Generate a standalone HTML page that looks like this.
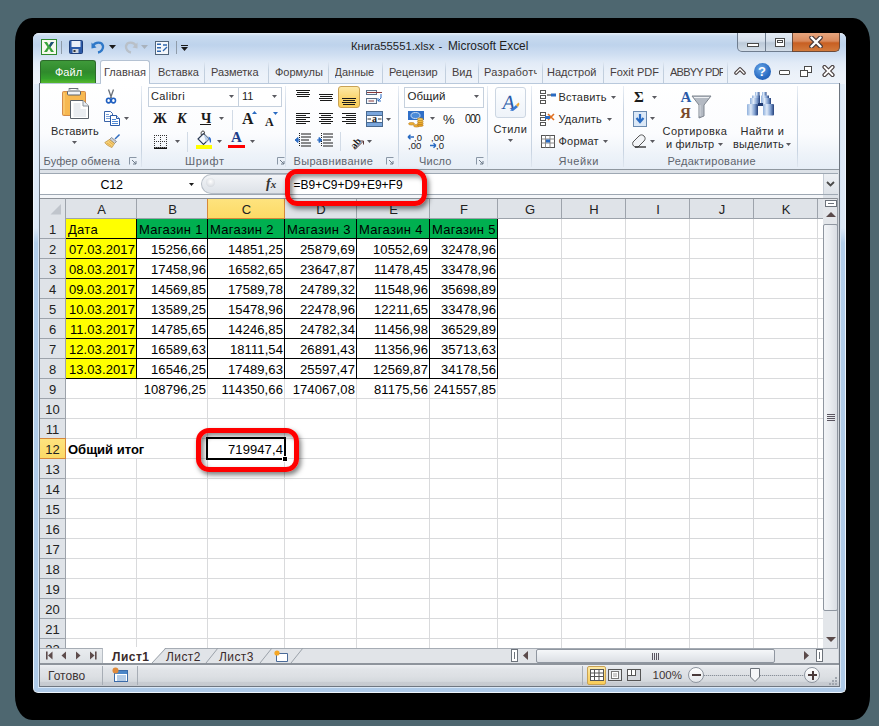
<!DOCTYPE html><html><head><meta charset="utf-8"><style>
*{box-sizing:border-box;margin:0;padding:0}
html,body{width:879px;height:726px;overflow:hidden;background:#4e6770;font-family:"Liberation Sans",sans-serif}
.a{position:absolute}
.t{position:absolute;white-space:pre;line-height:1}
.r{text-align:right}
.rib{color:#2b2b2b;font-size:11px}
.gl{color:#5e646d;font-size:11px}
.g{font-size:13px;color:#000}
.vl{position:absolute;width:1px;background:#d9dadc}
.hl{position:absolute;height:1px;background:#d9dadc}
.ch{position:absolute;top:203px;font-size:13px;color:#222;text-align:center;line-height:1}
.rh{position:absolute;left:40px;width:25px;font-size:13px;color:#222;text-align:center;line-height:1}
</style></head><body>
<div class="a" style="left:15px;top:18px;width:855px;height:702px;background:#000;border-radius:17px / 24px"></div>
<div class="a" style="left:33px;top:33px;width:813px;height:660px;border-radius:6px 6px 5px 5px;overflow:hidden;background:linear-gradient(#e2ecf8 0px,#dce8f6 195px,#b2ceeb 210px,#aecae8 100%);border:1px solid #eef5fc;border-top:none"></div>
<div class="a" style="left:38px;top:60px;width:803px;height:628px;border:1px solid #d8e6f6;border-top:none"></div>
<div class="a" style="left:33px;top:33px;width:813px;height:51px;border-radius:6px 6px 0 0;background:linear-gradient(#e6eef8 0px,#c8daef 3px,#bed3ec 12px,#d0dff2 22px,#e2ebf7 30px,#ebf1f9 40px,#eef3fa 51px)"></div>
<svg class="a" style="left:41px;top:39px" width="16" height="16" viewBox="0 0 16 16">
<rect x="0.5" y="0.5" width="15" height="15" fill="#f7f9ee" stroke="#2f8a2f"/>
<path d="M3 3 L6 3 L8 6.5 L10 3 L13 3 L9.5 8 L13 13 L10 13 L8 9.5 L6 13 L3 13 L6.5 8 Z" fill="#3aa53a"/>
<path d="M10 3 L13 3 L9.5 8 L8 6.5 Z" fill="#1e4f7a"/>
</svg>
<div class="a" style="left:61px;top:41px;width:1px;height:13px;background:#8f9caa"></div>
<svg class="a" style="left:69px;top:40px" width="14" height="14" viewBox="0 0 14 14">
<rect x="0.5" y="0.5" width="13" height="13" rx="1" fill="#2c5aa8" stroke="#1f3f7a"/>
<rect x="2.5" y="1" width="9" height="6" fill="#e8eef8"/>
<rect x="3.5" y="9" width="6" height="4" fill="#cfd6df"/>
<rect x="4.5" y="10" width="2" height="2" fill="#333"/>
</svg>
<svg class="a" style="left:91px;top:40px" width="14" height="14" viewBox="0 0 14 14">
<path d="M2 6 C4 1.5 11 1.5 12 6 C12.5 9 10 12 7 12.5" fill="none" stroke="#2f78c8" stroke-width="2.4"/>
<path d="M0.5 2.5 L5.5 7.5 L0.5 8.5 Z" fill="#2f78c8"/>
</svg>
<svg class="a" style="left:109px;top:45px" width="7" height="4"><path d="M0 0 H7 L3.5 4 Z" fill="#1a1a1a"/></svg>
<svg class="a" style="left:124px;top:40px" width="14" height="14" viewBox="0 0 14 14">
<path d="M12 6 C10 1.5 3 1.5 2 6 C1.5 9 4 12 7 12.5" fill="none" stroke="#b9c0c8" stroke-width="2.4"/>
<path d="M13.5 2.5 L8.5 7.5 L13.5 8.5 Z" fill="#b9c0c8"/>
</svg>
<svg class="a" style="left:141px;top:45px" width="7" height="4"><path d="M0 0 H7 L3.5 4 Z" fill="#a9b2bc"/></svg>
<svg class="a" style="left:155px;top:41px" width="14" height="14" viewBox="0 0 14 14">
<rect x="0.5" y="0.5" width="13" height="13" fill="#f4f7fb" stroke="#50647a"/>
<rect x="2" y="2.5" width="4" height="1.5" fill="#2f68b0"/><rect x="2" y="6" width="4" height="1.5" fill="#2f68b0"/><rect x="2" y="9.5" width="4" height="1.5" fill="#2f68b0"/>
<path d="M8 4 H12 M8 10 L12 6" stroke="#2f68b0" stroke-width="1.3"/>
</svg>
<div class="a" style="left:176px;top:41px;width:1px;height:13px;background:#8f9caa"></div>
<div class="a" style="left:181px;top:45px;width:7px;height:1px;background:#1a1a1a"></div>
<svg class="a" style="left:181px;top:47px" width="7" height="4"><path d="M0 0 H7 L3.5 4 Z" fill="#1a1a1a"/></svg>
<div class="t" style="left:351px;top:40.5px;font-size:11.3px;color:#1e1e1e">Книга55551.xlsx</div>
<div class="t" style="left:438.5px;top:40.5px;font-size:11.3px;color:#1e1e1e">-</div>
<div class="t" style="left:448px;top:40.5px;font-size:11.85px;color:#1e1e1e">Microsoft Excel</div>
<div class="a" style="left:737px;top:33px;width:56px;height:19px;border:1px solid #6f7d8f;border-top:none;border-radius:0 0 0 5px;background:linear-gradient(#e4ebf4,#d5dfeb 45%,#bccad9 55%,#d3dde8)"></div>
<div class="a" style="left:765px;top:33px;width:1px;height:18px;background:#6f7d8f"></div>
<div class="a" style="left:747px;top:43px;width:12px;height:4px;border:1px solid #4a4a4a;background:#fff"></div>
<div class="a" style="left:775px;top:38px;width:10px;height:9px;border:1px solid #4a4a4a;background:#fff"></div>
<div class="a" style="left:777px;top:40px;width:6px;height:3px;border:1px solid #4a4a4a"></div>
<div class="a" style="left:792px;top:33px;width:48px;height:19px;border:1px solid #6b4a3a;border-top:none;border-radius:0 0 5px 0;background:linear-gradient(#e7a57e,#d98a5c 45%,#c85f22 55%,#d27a3c)"></div>
<svg class="a" style="left:809px;top:36px" width="14" height="12" viewBox="0 0 14 12"><path d="M2.5 1.5 L11.5 10.5 M11.5 1.5 L2.5 10.5" stroke="#4a3a3a" stroke-width="4.6" stroke-linecap="round"/><path d="M2.5 1.5 L11.5 10.5 M11.5 1.5 L2.5 10.5" stroke="#fff" stroke-width="2.4" stroke-linecap="round"/></svg>
<div class="a" style="left:40px;top:60px;width:56px;height:23px;border-radius:3px 3px 0 0;background:linear-gradient(#3f9a3a,#2f8a2c 50%,#34a12c 80%,#58b82e);border:1px solid #2c6b2a;border-bottom:none"></div>
<div class="t" style="left:55px;top:67px;font-size:11px;color:#fff">Файл</div>
<div class="a" style="left:100px;top:60px;width:50px;height:24px;border-radius:3px 3px 0 0;background:linear-gradient(#fdfeff,#ffffff);border:1px solid #b4c2d3;border-bottom:none"></div>
<div class="t" style="left:104px;top:67px;font-size:11px;color:#463e3e">Главная</div>
<div class="t" style="left:158px;top:67px;font-size:11px;color:#463e3e;width:45.5px;overflow:hidden;letter-spacing:0px">Вставка</div>
<div class="a" style="left:204px;top:61px;width:1px;height:22px;background:linear-gradient(#e3ebf5,#c3d0df 40%,#c0cddc)"></div>
<div class="t" style="left:211px;top:67px;font-size:11px;color:#463e3e;width:56.5px;overflow:hidden;letter-spacing:0px">Разметка</div>
<div class="a" style="left:268px;top:61px;width:1px;height:22px;background:linear-gradient(#e3ebf5,#c3d0df 40%,#c0cddc)"></div>
<div class="t" style="left:275px;top:67px;font-size:11px;color:#463e3e;width:52.5px;overflow:hidden;letter-spacing:0px">Формулы</div>
<div class="a" style="left:328px;top:61px;width:1px;height:22px;background:linear-gradient(#e3ebf5,#c3d0df 40%,#c0cddc)"></div>
<div class="t" style="left:334.5px;top:67px;font-size:11px;color:#463e3e;width:47.0px;overflow:hidden;letter-spacing:0px">Данные</div>
<div class="a" style="left:382px;top:61px;width:1px;height:22px;background:linear-gradient(#e3ebf5,#c3d0df 40%,#c0cddc)"></div>
<div class="t" style="left:389px;top:67px;font-size:11px;color:#463e3e;width:55.5px;overflow:hidden;letter-spacing:0px">Рецензир</div>
<div class="a" style="left:445px;top:61px;width:1px;height:22px;background:linear-gradient(#e3ebf5,#c3d0df 40%,#c0cddc)"></div>
<div class="t" style="left:452px;top:67px;font-size:11px;color:#463e3e;width:25.5px;overflow:hidden;letter-spacing:0px">Вид</div>
<div class="a" style="left:478px;top:61px;width:1px;height:22px;background:linear-gradient(#e3ebf5,#c3d0df 40%,#c0cddc)"></div>
<div class="t" style="left:484px;top:67px;font-size:11px;color:#463e3e;width:53px;overflow:hidden;letter-spacing:0.25px">Разработчик</div>
<div class="a" style="left:542px;top:61px;width:1px;height:22px;background:linear-gradient(#e3ebf5,#c3d0df 40%,#c0cddc)"></div>
<div class="t" style="left:547px;top:67px;font-size:11px;color:#463e3e;width:55.5px;overflow:hidden;letter-spacing:0px">Надстрой</div>
<div class="a" style="left:603px;top:61px;width:1px;height:22px;background:linear-gradient(#e3ebf5,#c3d0df 40%,#c0cddc)"></div>
<div class="t" style="left:610px;top:67px;font-size:11px;color:#463e3e;width:52.5px;overflow:hidden;letter-spacing:0px">Foxit PDF</div>
<div class="a" style="left:663px;top:61px;width:1px;height:22px;background:linear-gradient(#e3ebf5,#c3d0df 40%,#c0cddc)"></div>
<div class="t" style="left:670px;top:67px;font-size:11px;color:#463e3e;width:53px;overflow:hidden;letter-spacing:-0.75px">ABBYY PDF</div>
<div class="a" style="left:727px;top:61px;width:1px;height:22px;background:linear-gradient(#e3ebf5,#c3d0df 40%,#c0cddc)"></div>
<svg class="a" style="left:734px;top:66px" width="12" height="9" viewBox="0 0 12 9"><path d="M2 7 L6 3 L10 7" fill="none" stroke="#4a4040" stroke-width="3.6" stroke-linejoin="round" stroke-linecap="round"/><path d="M2 7 L6 3 L10 7" fill="none" stroke="#fff" stroke-width="1.3" stroke-linecap="round"/></svg>
<div class="a" style="left:754px;top:63px;width:17px;height:17px;border-radius:50%;background:radial-gradient(circle at 40% 35%,#6aa8e8,#2a6bc2 60%,#1d55a8)"></div>
<div class="t" style="left:758px;top:65px;font-size:13px;font-weight:bold;color:#fff">?</div>
<div class="a" style="left:779px;top:70px;width:11px;height:5px;border:1px solid #4a4a4a;background:#fff;border-radius:1px"></div>
<div class="a" style="left:804px;top:66px;width:8px;height:7px;border:1px solid #4a4a4a;background:#fff"></div>
<div class="a" style="left:800px;top:70px;width:8px;height:7px;border:1px solid #4a4a4a;background:#fff"></div>
<svg class="a" style="left:822px;top:65px" width="13" height="12" viewBox="0 0 13 12"><path d="M2.5 2 L10.5 10 M10.5 2 L2.5 10" stroke="#4a4040" stroke-width="4.2" stroke-linecap="round"/><path d="M2.5 2 L10.5 10 M10.5 2 L2.5 10" stroke="#fff" stroke-width="1.8" stroke-linecap="round"/></svg>
<div class="a" style="left:39px;top:83px;width:801px;height:87px;background:linear-gradient(#ffffff 0px,#fbfcfe 50px,#eef3f9 70px,#e6edf6 86px);border:1px solid #b9c9dc;border-bottom-color:#8f979f"></div>
<div class="a" style="left:101px;top:83px;width:48px;height:1px;background:#fff"></div>
<div class="a" style="left:141px;top:86px;width:1px;height:81px;background:linear-gradient(#e9eef5,#c8d4e2 30%,#c8d4e2 80%,#dfe6ef)"></div>
<div class="a" style="left:285px;top:86px;width:1px;height:81px;background:linear-gradient(#e9eef5,#c8d4e2 30%,#c8d4e2 80%,#dfe6ef)"></div>
<div class="a" style="left:398px;top:86px;width:1px;height:81px;background:linear-gradient(#e9eef5,#c8d4e2 30%,#c8d4e2 80%,#dfe6ef)"></div>
<div class="a" style="left:487px;top:86px;width:1px;height:81px;background:linear-gradient(#e9eef5,#c8d4e2 30%,#c8d4e2 80%,#dfe6ef)"></div>
<div class="a" style="left:531px;top:86px;width:1px;height:81px;background:linear-gradient(#e9eef5,#c8d4e2 30%,#c8d4e2 80%,#dfe6ef)"></div>
<div class="a" style="left:623px;top:86px;width:1px;height:81px;background:linear-gradient(#e9eef5,#c8d4e2 30%,#c8d4e2 80%,#dfe6ef)"></div>
<div class="a" style="left:797px;top:86px;width:1px;height:81px;background:linear-gradient(#e9eef5,#c8d4e2 30%,#c8d4e2 80%,#dfe6ef)"></div>
<div class="t gl" style="left:43.5px;top:156px;letter-spacing:0.15px">Буфер обмена</div>
<div class="t gl" style="left:185px;top:156px;letter-spacing:0.7px">Шрифт</div>
<div class="t gl" style="left:293.5px;top:156px;letter-spacing:0.33px">Выравнивание</div>
<div class="t gl" style="left:419px;top:156px;letter-spacing:0.2px">Число</div>
<div class="t gl" style="left:558.5px;top:156px;letter-spacing:0.6px">Ячейки</div>
<div class="t gl" style="left:667.5px;top:156px;letter-spacing:0.33px">Редактирование</div>
<svg class="a" style="left:129px;top:157px" width="8" height="8" viewBox="0 0 8 8"><path d="M0.5 7.5 V0.5 H7.5" fill="none" stroke="#8a97a6"/><path d="M3 3 L7 7 M7 4 V7 H4" fill="none" stroke="#6d7a89"/></svg>
<svg class="a" style="left:277px;top:157px" width="8" height="8" viewBox="0 0 8 8"><path d="M0.5 7.5 V0.5 H7.5" fill="none" stroke="#8a97a6"/><path d="M3 3 L7 7 M7 4 V7 H4" fill="none" stroke="#6d7a89"/></svg>
<svg class="a" style="left:386px;top:157px" width="8" height="8" viewBox="0 0 8 8"><path d="M0.5 7.5 V0.5 H7.5" fill="none" stroke="#8a97a6"/><path d="M3 3 L7 7 M7 4 V7 H4" fill="none" stroke="#6d7a89"/></svg>
<svg class="a" style="left:476px;top:157px" width="8" height="8" viewBox="0 0 8 8"><path d="M0.5 7.5 V0.5 H7.5" fill="none" stroke="#8a97a6"/><path d="M3 3 L7 7 M7 4 V7 H4" fill="none" stroke="#6d7a89"/></svg>
<svg class="a" style="left:60px;top:88px" width="30" height="32" viewBox="0 0 30 32">
<rect x="2.5" y="3.5" width="23" height="24" rx="1" fill="#f7b850" stroke="#d38a4a"/>
<path d="M4 5 V26" stroke="#fbd488" stroke-width="1"/>
<path d="M9 1.5 C9 0.5 10.5 0.2 11.5 0.2 H15.5 C17 0.2 18 0.8 18 1.5" fill="none" stroke="#6a7079" stroke-width="1.4"/>
<rect x="7.5" y="3" width="13" height="4" rx="1" fill="#f2f4f7" stroke="#5c636b"/>
<path d="M10.5 12.5 H23 L28.5 18 V30.5 H10.5 Z" fill="#fff" stroke="#5c636b"/>
<path d="M23 12.5 V18 H28.5" fill="#e8edf3" stroke="#8a929b"/>
<path d="M13.5 16 H20.5 M13.5 18 H20.5 M13.5 20 H20.5 M13.5 22 H26 M13.5 24 H26 M13.5 26 H26 M13.5 28 H26" stroke="#aab6c4" stroke-width="0.5"/>
</svg>
<div class="t rib" style="left:51px;top:126px;color:#2a2a2a;letter-spacing:0.15px">Вставить</div>
<svg class="a" style="left:72px;top:141px" width="5" height="3"><path d="M0 0 H5 L2.5 3 Z" fill="#5a5a60"/></svg>
<svg class="a" style="left:105px;top:89px" width="12" height="15" viewBox="0 0 12 15">
<path d="M3.5 0.5 L6.5 9 M8.5 0.5 L5.5 9" stroke="#6a7079" stroke-width="1.3"/>
<ellipse cx="3.6" cy="11.6" rx="2.1" ry="2.3" fill="#fff" stroke="#1f5fc0" stroke-width="1.6"/>
<ellipse cx="8.4" cy="11.6" rx="2.1" ry="2.3" fill="#fff" stroke="#1f5fc0" stroke-width="1.6"/>
</svg>
<svg class="a" style="left:104px;top:111px" width="16" height="15" viewBox="0 0 16 15">
<path d="M0.5 0.5 H6.5 L8.5 2.5 V10.5 H0.5 Z" fill="#fff" stroke="#3a64a8"/>
<path d="M2 3.5 H5 M2 5.5 H6.5 M2 7.5 H6.5" stroke="#5a8ad0" stroke-width="0.8"/>
<path d="M6.5 4.5 H12.5 L15.5 7.5 V14.5 H6.5 Z" fill="#fff" stroke="#2a5aa8"/>
<path d="M8 8.5 H12 M8 10.5 H14 M8 12.5 H14" stroke="#3a7ad0" stroke-width="0.9"/>
<path d="M12.5 4.5 V7.5 H15.5" fill="#dce8f6" stroke="#2a5aa8"/>
</svg>
<svg class="a" style="left:124px;top:117px" width="5" height="3"><path d="M0 0 H5 L2.5 3 Z" fill="#5a5a60"/></svg>
<svg class="a" style="left:104px;top:133px" width="17" height="15" viewBox="0 0 17 15">
<path d="M10.5 5.5 L14.5 1.5 C15.3 0.8 16.3 1.6 15.6 2.5 L11.5 6.5 Z" fill="#2f6cc0"/>
<path d="M7.5 4.5 L12.5 8.5 L10.5 10.5 L5.5 6.5 Z" fill="#c9ced6" stroke="#6a7079" stroke-width="0.7"/>
<path d="M5.5 6.5 L10.5 10.5 L8 14.5 C5 13.5 2 11.5 0.8 9.5 Z" fill="#f5d27a" stroke="#b98a3a" stroke-width="0.7"/>
<path d="M3 10 L7.5 13 M5 8.5 L9 11.5" stroke="#e8a840" stroke-width="0.9"/>
</svg>
<div class="a" style="left:148px;top:87px;width:134px;height:20px;border:1px solid #c5d0dd;background:#fff"></div>
<div class="a" style="left:238px;top:88px;width:1px;height:18px;background:#c5d0dd"></div>
<div class="t rib" style="left:151px;top:91px;color:#1e1e1e;letter-spacing:0.4px">Calibri</div>
<div class="t rib" style="left:242px;top:91px;color:#1e1e1e">11</div>
<svg class="a" style="left:229px;top:95px" width="5" height="3"><path d="M0 0 H5 L2.5 3 Z" fill="#5a5a60"/></svg>
<svg class="a" style="left:272px;top:95px" width="5" height="3"><path d="M0 0 H5 L2.5 3 Z" fill="#5a5a60"/></svg>
<div class="t" style="left:153px;top:112px;font-family:Liberation Serif;font-weight:bold;font-size:14px;color:#1a1a1a">Ж</div>
<div class="t" style="left:177px;top:112px;font-family:Liberation Serif;font-weight:bold;font-style:italic;font-size:14px;color:#1a1a1a">К</div>
<div class="t" style="left:201px;top:112px;font-family:Liberation Serif;font-weight:bold;font-size:14px;color:#1a1a1a">Ч</div>
<div class="a" style="left:200px;top:124px;width:11px;height:1px;background:#1a1a1a"></div>
<svg class="a" style="left:219px;top:117px" width="5" height="3"><path d="M0 0 H5 L2.5 3 Z" fill="#5a5a60"/></svg>
<div class="a" style="left:232px;top:110px;width:1px;height:20px;background:#d2dbe6"></div>
<div class="t" style="left:242px;top:111px;font-family:Liberation Serif;font-weight:bold;font-size:16px;color:#1a1a1a">A</div>
<svg class="a" style="left:252px;top:111px" width="5" height="3"><path d="M0 3 L2.5 0 L5 3Z" fill="#2a6bc2"/></svg>
<div class="t" style="left:265px;top:116px;font-family:Liberation Serif;font-weight:bold;font-size:12px;color:#1a1a1a">A</div>
<svg class="a" style="left:273px;top:112px" width="5" height="3"><path d="M0 0 L2.5 3 L5 0Z" fill="#2a6bc2"/></svg>
<svg class="a" style="left:154px;top:135px" width="14" height="14" viewBox="0 0 14 14"><rect x="0" y="0" width="1" height="1" fill="#333"/><rect x="2" y="0" width="1" height="1" fill="#333"/><rect x="4" y="0" width="1" height="1" fill="#333"/><rect x="6" y="0" width="1" height="1" fill="#333"/><rect x="8" y="0" width="1" height="1" fill="#333"/><rect x="10" y="0" width="1" height="1" fill="#333"/><rect x="12" y="0" width="1" height="1" fill="#333"/><rect x="0" y="6" width="1" height="1" fill="#333"/><rect x="2" y="6" width="1" height="1" fill="#333"/><rect x="4" y="6" width="1" height="1" fill="#333"/><rect x="6" y="6" width="1" height="1" fill="#333"/><rect x="8" y="6" width="1" height="1" fill="#333"/><rect x="10" y="6" width="1" height="1" fill="#333"/><rect x="12" y="6" width="1" height="1" fill="#333"/><rect x="0" y="12" width="1" height="1" fill="#333"/><rect x="2" y="12" width="1" height="1" fill="#333"/><rect x="4" y="12" width="1" height="1" fill="#333"/><rect x="6" y="12" width="1" height="1" fill="#333"/><rect x="8" y="12" width="1" height="1" fill="#333"/><rect x="10" y="12" width="1" height="1" fill="#333"/><rect x="12" y="12" width="1" height="1" fill="#333"/><rect x="0" y="2" width="1" height="1" fill="#333"/><rect x="0" y="4" width="1" height="1" fill="#333"/><rect x="0" y="6" width="1" height="1" fill="#333"/><rect x="0" y="8" width="1" height="1" fill="#333"/><rect x="0" y="10" width="1" height="1" fill="#333"/><rect x="6" y="2" width="1" height="1" fill="#333"/><rect x="6" y="4" width="1" height="1" fill="#333"/><rect x="6" y="6" width="1" height="1" fill="#333"/><rect x="6" y="8" width="1" height="1" fill="#333"/><rect x="6" y="10" width="1" height="1" fill="#333"/><rect x="12" y="2" width="1" height="1" fill="#333"/><rect x="12" y="4" width="1" height="1" fill="#333"/><rect x="12" y="6" width="1" height="1" fill="#333"/><rect x="12" y="8" width="1" height="1" fill="#333"/><rect x="12" y="10" width="1" height="1" fill="#333"/><rect x="0" y="12.5" width="13" height="1.5" fill="#111"/></svg>
<svg class="a" style="left:175px;top:140px" width="5" height="3"><path d="M0 0 H5 L2.5 3 Z" fill="#5a5a60"/></svg>
<div class="a" style="left:187px;top:132px;width:1px;height:20px;background:#d2dbe6"></div>
<svg class="a" style="left:195px;top:130px" width="18" height="19" viewBox="0 0 18 19">
<path d="M3 9 L8.5 3.5 L14 9 L8.5 14.5 Z" fill="#f4f8fd" stroke="#2a3a55" stroke-width="1.1"/>
<path d="M8.5 3.5 L14 9 L11 12 Z" fill="#b9cde6"/>
<path d="M6.5 5.5 C5.5 2.5 6.5 1 8 1 C9.5 1 10 2.5 9 5" fill="none" stroke="#444" stroke-width="1"/>
<path d="M13.5 6.5 C15.5 7 16.5 9 16 12 L15 13 C14.5 11 14.5 9.5 14 9 Z" fill="#2f6ccc"/>
<rect x="1" y="15" width="16" height="4" fill="#ffff00"/>
</svg>
<svg class="a" style="left:217px;top:140px" width="5" height="3"><path d="M0 0 H5 L2.5 3 Z" fill="#5a5a60"/></svg>
<div class="t" style="left:231px;top:130px;font-family:Liberation Serif;font-weight:bold;font-size:15px;color:#1d3f8a">A</div>
<div class="a" style="left:228px;top:145px;width:17px;height:3px;background:#ff0000"></div>
<svg class="a" style="left:250px;top:140px" width="5" height="3"><path d="M0 0 H5 L2.5 3 Z" fill="#5a5a60"/></svg>
<div class="a" style="left:296px;top:90px;width:14px;height:1px;background:#1a1a1a"></div>
<div class="a" style="left:297px;top:92px;width:12px;height:1px;background:#1a1a1a"></div>
<div class="a" style="left:296px;top:94px;width:14px;height:1px;background:#1a1a1a"></div>
<div class="a" style="left:297px;top:96px;width:12px;height:1px;background:#1a1a1a"></div>
<div class="a" style="left:319px;top:94px;width:14px;height:1px;background:#1a1a1a"></div>
<div class="a" style="left:320px;top:96px;width:12px;height:1px;background:#1a1a1a"></div>
<div class="a" style="left:319px;top:98px;width:14px;height:1px;background:#1a1a1a"></div>
<div class="a" style="left:320px;top:100px;width:12px;height:1px;background:#1a1a1a"></div>
<div class="a" style="left:338px;top:86px;width:22px;height:22px;border:1px solid #c9a254;border-radius:3px;background:linear-gradient(#fde9a6,#fbd876 50%,#f9cd58)"></div>
<div class="a" style="left:342px;top:98px;width:14px;height:1px;background:#1a1a1a"></div>
<div class="a" style="left:343px;top:100px;width:12px;height:1px;background:#1a1a1a"></div>
<div class="a" style="left:342px;top:102px;width:14px;height:1px;background:#1a1a1a"></div>
<div class="a" style="left:343px;top:104px;width:12px;height:1px;background:#1a1a1a"></div>
<svg class="a" style="left:366px;top:89px" width="17" height="16" viewBox="0 0 17 16">
<rect x="0.5" y="1.5" width="10" height="4" fill="#f4f7fb" stroke="#5a6f88"/>
<path d="M1 3.5 H16" stroke="#8a3a3a"/>
<rect x="0.5" y="9.5" width="10" height="5" fill="#f4f7fb" stroke="#5a6f88"/>
<path d="M2.5 12 H8" stroke="#8a3a3a"/>
<path d="M15 5 V9 L12 12 M12 9 V12 H15" fill="none" stroke="#2a6bc2"/>
</svg>
<div class="a" style="left:296px;top:113px;width:14px;height:1px;background:#1a1a1a"></div>
<div class="a" style="left:296px;top:115px;width:10px;height:1px;background:#1a1a1a"></div>
<div class="a" style="left:296px;top:117px;width:14px;height:1px;background:#1a1a1a"></div>
<div class="a" style="left:296px;top:119px;width:10px;height:1px;background:#1a1a1a"></div>
<div class="a" style="left:296px;top:121px;width:14px;height:1px;background:#1a1a1a"></div>
<div class="a" style="left:296px;top:123px;width:10px;height:1px;background:#1a1a1a"></div>
<div class="a" style="left:319px;top:113px;width:14px;height:1px;background:#1a1a1a"></div>
<div class="a" style="left:321px;top:115px;width:10px;height:1px;background:#1a1a1a"></div>
<div class="a" style="left:319px;top:117px;width:14px;height:1px;background:#1a1a1a"></div>
<div class="a" style="left:321px;top:119px;width:10px;height:1px;background:#1a1a1a"></div>
<div class="a" style="left:319px;top:121px;width:14px;height:1px;background:#1a1a1a"></div>
<div class="a" style="left:321px;top:123px;width:10px;height:1px;background:#1a1a1a"></div>
<div class="a" style="left:342px;top:113px;width:14px;height:1px;background:#1a1a1a"></div>
<div class="a" style="left:346px;top:115px;width:10px;height:1px;background:#1a1a1a"></div>
<div class="a" style="left:342px;top:117px;width:14px;height:1px;background:#1a1a1a"></div>
<div class="a" style="left:346px;top:119px;width:10px;height:1px;background:#1a1a1a"></div>
<div class="a" style="left:342px;top:121px;width:14px;height:1px;background:#1a1a1a"></div>
<div class="a" style="left:346px;top:123px;width:10px;height:1px;background:#1a1a1a"></div>
<svg class="a" style="left:366px;top:111px" width="17" height="16" viewBox="0 0 17 16">
<rect x="0.5" y="0.5" width="16" height="15" fill="#fff" stroke="#4a6a90"/>
<rect x="1" y="1" width="15" height="3" fill="#7aa6dc"/><rect x="1" y="12" width="15" height="3" fill="#7aa6dc"/>
<path d="M1 4.5 H16 M1 11.5 H16" stroke="#4a6a90"/>
<text x="8.5" y="10.5" font-family="Liberation Serif" font-size="10" font-weight="bold" text-anchor="middle" fill="#222">a</text>
<path d="M1.5 8 H5 M12 8 H15.5" stroke="#333"/>
</svg>
<svg class="a" style="left:386px;top:118px" width="5" height="3"><path d="M0 0 H5 L2.5 3 Z" fill="#5a5a60"/></svg>
<svg class="a" style="left:295px;top:133px" width="16" height="14" viewBox="0 0 16 14">
<path d="M6 1 H16 M6 4 H16 M6 7 H14 M6 10 H16 M6 13 H16" stroke="#1a1a1a"/>
<path d="M4.5 0 V14" stroke="#1a1a1a" stroke-dasharray="1 1"/>
<path d='M0 7 L3 4.5 V9.5 Z M2 7 H5' fill='#2a6bc2' stroke='#2a6bc2'/>
</svg>
<svg class="a" style="left:317px;top:133px" width="16" height="14" viewBox="0 0 16 14">
<path d="M6 1 H16 M6 4 H16 M6 7 H14 M6 10 H16 M6 13 H16" stroke="#1a1a1a"/>
<path d="M4.5 0 V14" stroke="#1a1a1a" stroke-dasharray="1 1"/>
<path d='M5 7 L2 4.5 V9.5 Z M0 7 H3' fill='#2a6bc2' stroke='#2a6bc2'/>
</svg>
<div class="a" style="left:340px;top:132px;width:1px;height:19px;background:#d2dbe6"></div>
<svg class="a" style="left:349px;top:134px" width="17" height="16" viewBox="0 0 17 16">
<text x="1" y="13" font-family="Liberation Serif" font-size="10" font-weight="bold" fill="#1a1a1a" transform="rotate(-50 6 9)">ab</text>
<path d="M6 15.5 L14 7.5 M11 7 H14.5 V10.5" fill="none" stroke="#5a3a3a"/>
</svg>
<svg class="a" style="left:367px;top:140px" width="5" height="3"><path d="M0 0 H5 L2.5 3 Z" fill="#5a5a60"/></svg>
<div class="a" style="left:404px;top:87px;width:80px;height:21px;border:1px solid #c5d0dd;background:#fff"></div>
<div class="t" style="left:407.5px;top:91px;font-size:11.5px;color:#1e1e1e">Общий</div>
<svg class="a" style="left:474px;top:95px" width="5" height="3"><path d="M0 0 H5 L2.5 3 Z" fill="#5a5a60"/></svg>
<svg class="a" style="left:408px;top:110px" width="18" height="18" viewBox="0 0 18 18">
<rect x="0" y="1" width="16" height="9" fill="#2f6fc8"/>
<ellipse cx="7.5" cy="5.5" rx="4.5" ry="3" fill="#4a8ad8" stroke="#d6e4f5" stroke-width="0.9"/>
<ellipse cx="3.5" cy="13.8" rx="3" ry="1.3" fill="#f0b030" stroke="#a86a10" stroke-width="0.5"/>
<ellipse cx="8.5" cy="15.8" rx="3" ry="1.3" fill="#f0b030" stroke="#a86a10" stroke-width="0.5"/>
<ellipse cx="12.3" cy="15.2" rx="3" ry="1.3" fill="#e8a020" stroke="#a86a10" stroke-width="0.5"/>
<ellipse cx="12.3" cy="13.2" rx="3" ry="1.3" fill="#f0b030" stroke="#a86a10" stroke-width="0.5"/>
<ellipse cx="12.3" cy="11.2" rx="3" ry="1.3" fill="#f5c040" stroke="#a86a10" stroke-width="0.5"/>
<ellipse cx="12.3" cy="9.2" rx="3" ry="1.3" fill="#f8d060" stroke="#a86a10" stroke-width="0.5"/>
</svg>
<svg class="a" style="left:430px;top:117px" width="5" height="3"><path d="M0 0 H5 L2.5 3 Z" fill="#5a5a60"/></svg>
<div class="t" style="left:443px;top:113px;font-size:13px;color:#1a1a1a">%</div>
<div class="t" style="left:465px;top:113px;font-size:12.5px;color:#1a1a1a;letter-spacing:-1.2px;transform:scaleX(0.85);transform-origin:0 0">000</div>
<svg class="a" style="left:407px;top:133px" width="18" height="17" viewBox="0 0 18 17">
<path d="M1 4 H7 M1 4 L3.5 1.8 M1 4 L3.5 6.2" stroke="#2a6bc2" stroke-width="1.4" fill="none"/>
<text x="7" y="8" font-family="Liberation Sans" font-size="9.5" fill="#1a1a1a">,0</text>
<text x="1" y="16" font-family="Liberation Sans" font-size="9.5" fill="#1a1a1a">,00</text>
</svg>
<svg class="a" style="left:429px;top:133px" width="18" height="17" viewBox="0 0 18 17">
<text x="2" y="8" font-family="Liberation Sans" font-size="9.5" fill="#1a1a1a">,00</text>
<path d="M1 12.5 H7 M7 12.5 L4.5 10.3 M7 12.5 L4.5 14.7" stroke="#2a6bc2" stroke-width="1.4" fill="none"/>
<text x="7" y="16" font-family="Liberation Sans" font-size="9.5" fill="#1a1a1a">,0</text>
</svg>
<div class="a" style="left:495px;top:87px;width:31px;height:31px;border:1px solid #ccd6e2;border-radius:3px;background:linear-gradient(#fdfeff,#eef3f9)"></div>
<div class="t" style="left:502px;top:92px;font-family:Liberation Serif;font-size:20px;color:#2a5aa8;transform:skewX(-8deg)">A</div>
<svg class="a" style="left:508px;top:101px" width="12" height="10" viewBox="0 0 12 10"><path d="M2 9.5 L8 4 L10 6 L5 10 Z" fill="#3a78d0"/><path d="M8 4 L10.5 1.5 L11.5 3 L10 6 Z" fill="#f0a830"/></svg>
<div class="t rib" style="left:493.5px;top:124px;letter-spacing:0.4px">Стили</div>
<svg class="a" style="left:508px;top:139px" width="5" height="3"><path d="M0 0 H5 L2.5 3 Z" fill="#5a5a60"/></svg>
<svg class="a" style="left:540px;top:90px" width="17" height="15" viewBox="0 0 17 15"><rect x="0.5" y="0.5" width="5" height="3" fill="#fff" stroke="#555"/><rect x="0.5" y="5.5" width="5" height="3" fill="#fff" stroke="#555"/><rect x="0.5" y="10.5" width="5" height="3" fill="#fff" stroke="#555"/><path d="M7 5 H15" stroke="#1a1a1a"/><rect x="11" y="3.5" width="5" height="3" fill="#2a6bc2"/></svg>
<svg class="a" style="left:540px;top:112px" width="17" height="15" viewBox="0 0 17 15"><rect x="0.5" y="0.5" width="5" height="3" fill="#fff" stroke="#555"/><rect x="0.5" y="5.5" width="5" height="3" fill="#fff" stroke="#555"/><rect x="0.5" y="10.5" width="5" height="3" fill="#fff" stroke="#555"/><path d="M8 2 L14 8 M14 2 L8 8" stroke="#e07020" stroke-width="1.6"/><rect x="5" y="4" width="5" height="3" fill="#2a6bc2"/></svg>
<svg class="a" style="left:540px;top:134px" width="17" height="15" viewBox="0 0 17 15"><rect x="1.5" y="1.5" width="13" height="12" fill="#fff" stroke="#555"/><path d="M1.5 5 H14.5 M1.5 9 H14.5 M5.5 1.5 V13.5 M10 1.5 V13.5" stroke="#888"/><rect x="6" y="5.5" width="4" height="3" fill="#2a6bc2"/></svg>
<div class="t rib" style="left:558.5px;top:92px;letter-spacing:0.2px">Вставить</div>
<svg class="a" style="left:611px;top:96px" width="5" height="3"><path d="M0 0 H5 L2.5 3 Z" fill="#5a5a60"/></svg>
<div class="t rib" style="left:558.5px;top:113.5px;letter-spacing:0.2px">Удалить</div>
<svg class="a" style="left:607px;top:118px" width="5" height="3"><path d="M0 0 H5 L2.5 3 Z" fill="#5a5a60"/></svg>
<div class="t rib" style="left:558.5px;top:135.5px;letter-spacing:0.2px">Формат</div>
<svg class="a" style="left:603px;top:140px" width="5" height="3"><path d="M0 0 H5 L2.5 3 Z" fill="#5a5a60"/></svg>
<div class="t" style="left:634px;top:90px;font-family:Liberation Serif;font-weight:bold;font-size:15px;color:#1a1a1a">Σ</div>
<svg class="a" style="left:651.5px;top:96px" width="5" height="3"><path d="M0 0 H5 L2.5 3 Z" fill="#5a5a60"/></svg>
<svg class="a" style="left:633px;top:111px" width="14" height="16" viewBox="0 0 14 16">
<rect x="0.5" y="0.5" width="13" height="15" fill="#dbe8f7" stroke="#6a8ab0"/>
<path d="M7 3 V10 M3.5 7 L7 11 L10.5 7" fill="none" stroke="#2a6bc2" stroke-width="2.2"/>
</svg>
<svg class="a" style="left:650px;top:117px" width="5" height="3"><path d="M0 0 H5 L2.5 3 Z" fill="#5a5a60"/></svg>
<svg class="a" style="left:632px;top:133px" width="16" height="15" viewBox="0 0 16 15">
<path d="M1 9 L7 3 C8.5 1.5 10.5 1.5 12 3 C13.5 4.5 13.5 6.5 12 8 L6 14 H3 C1 13 0 11 1 9 Z" fill="#f2f4f7" stroke="#555"/>
<path d="M3 14 H14" stroke="#1a1a1a" stroke-width="1.2"/>
</svg>
<svg class="a" style="left:650px;top:140px" width="5" height="3"><path d="M0 0 H5 L2.5 3 Z" fill="#5a5a60"/></svg>
<svg class="a" style="left:680px;top:89px" width="32" height="30" viewBox="0 0 32 30">
<text x="0.5" y="13" font-family="Liberation Serif" font-size="15" font-weight="bold" fill="#2a5aa8">A</text>
<text x="0" y="28.5" font-family="Liberation Serif" font-size="15" font-weight="bold" fill="#7a4a2a">Я</text>
<path d="M12 7 H31 L24 16 V27 L19 29 V16 Z" fill="#b4bac3" stroke="#7f868f"/>
<path d="M14 8.5 H29" stroke="#eef0f3"/>
<path d="M20 16 V27" stroke="#d6dae0"/>
</svg>
<div class="t rib" style="left:662.5px;top:126px;letter-spacing:0.45px">Сортировка</div>
<div class="t rib" style="left:666px;top:139px;letter-spacing:0.2px">и фильтр</div>
<svg class="a" style="left:718px;top:143px" width="5" height="3"><path d="M0 0 H5 L2.5 3 Z" fill="#5a5a60"/></svg>
<svg class="a" style="left:746px;top:91px" width="30" height="26" viewBox="0 0 30 26">
<defs><linearGradient id="bn" x1="0" x2="1"><stop offset="0" stop-color="#8fb0dc"/><stop offset="0.35" stop-color="#dfeaf8"/><stop offset="0.7" stop-color="#7f9fd0"/><stop offset="1" stop-color="#24407a"/></linearGradient></defs>
<rect x="9" y="1" width="4.5" height="4" fill="url(#bn)"/><rect x="16" y="1" width="4.5" height="4" fill="url(#bn)"/>
<rect x="6" y="4.5" width="8" height="3" fill="url(#bn)"/><rect x="15" y="4.5" width="8" height="3" fill="url(#bn)"/>
<rect x="4" y="7" width="10" height="6.5" fill="url(#bn)"/><rect x="15" y="7" width="10" height="6.5" fill="url(#bn)"/>
<rect x="12" y="12" width="5" height="3" fill="#1f3a70"/>
<rect x="1" y="13" width="11" height="11.5" rx="1" fill="url(#bn)"/><rect x="17" y="13" width="11" height="11.5" rx="1" fill="url(#bn)"/>
</svg>
<div class="t rib" style="left:740.5px;top:126px;letter-spacing:0.45px">Найти и</div>
<div class="t rib" style="left:733px;top:139px;letter-spacing:0.2px">выделить</div>
<svg class="a" style="left:786px;top:143px" width="5" height="3"><path d="M0 0 H5 L2.5 3 Z" fill="#5a5a60"/></svg>
<div class="a" style="left:39px;top:170px;width:801px;height:29px;background:#dde2e8"></div>
<div class="a" style="left:40px;top:173px;width:798px;height:22px;background:#fff;border-top:1px solid #9ea8b3;border-bottom:1px solid #9ea8b3"></div>
<div class="a" style="left:40px;top:195px;width:783px;height:3px;background:#f4f6f9"></div>
<div class="t" style="left:100.5px;top:179px;font-size:12.5px;letter-spacing:-0.3px;color:#000">C12</div>
<svg class="a" style="left:189px;top:183px" width="5" height="3"><path d="M0 0 H5 L2.5 3 Z" fill="#1a1a1a"/></svg>
<div class="a" style="left:201px;top:174px;width:86px;height:20px;border-radius:10px 0 0 10px;background:linear-gradient(#f2f4f7,#dde2e8);border:1px solid #b6bdc6;border-right:none"></div>
<div class="a" style="left:206px;top:178px;width:9px;height:9px;border-radius:50%;background:radial-gradient(circle at 50% 40%,#fff,#c9ced6)"></div>
<div class="t" style="left:266px;top:177px;font-family:Liberation Serif;font-style:italic;font-weight:bold;font-size:14px;color:#333">f<span style="font-size:11px">x</span></div>
<div class="a" style="left:286px;top:174px;width:1px;height:20px;background:#c5ccd5"></div>
<div class="t" style="left:293.5px;top:179px;font-size:12px;color:#000">=B9+C9+D9+E9+F9</div>
<div class="a" style="left:823px;top:174px;width:15px;height:20px;background:linear-gradient(#edf0f4,#dde2e8);border-left:1px solid #c5ccd5"></div>
<svg class="a" style="left:826px;top:181px" width="9" height="6"><path d="M1 1 L4.5 4.5 L8 1" fill="none" stroke="#4a4a4a" stroke-width="1.8"/></svg>
<div class="a" style="left:40px;top:198px;width:783px;height:450px;background:#fff"></div>
<div class="a" style="left:40px;top:198px;width:783px;height:21px;background:#dfe3e8;border-top:1px solid #8b9097;border-bottom:1px solid #9da3ab"></div>
<div class="a" style="left:40px;top:198px;width:26px;height:450px;background:#dfe3e8;border-right:1px solid #9da3ab;border-top:1px solid #8b9097"></div>
<div class="vl" style="left:136px;top:219px;height:429px"></div>
<div class="vl" style="left:207px;top:219px;height:429px"></div>
<div class="vl" style="left:284px;top:219px;height:429px"></div>
<div class="vl" style="left:356px;top:219px;height:429px"></div>
<div class="vl" style="left:429px;top:219px;height:429px"></div>
<div class="vl" style="left:497px;top:219px;height:429px"></div>
<div class="vl" style="left:561px;top:219px;height:429px"></div>
<div class="vl" style="left:625px;top:219px;height:429px"></div>
<div class="vl" style="left:689px;top:219px;height:429px"></div>
<div class="vl" style="left:753px;top:219px;height:429px"></div>
<div class="vl" style="left:817px;top:219px;height:429px"></div>
<div class="hl" style="left:66px;top:238px;width:757px"></div>
<div class="a" style="left:40px;top:238px;width:25px;height:1px;background:#9da3ab"></div>
<div class="hl" style="left:66px;top:258px;width:757px"></div>
<div class="a" style="left:40px;top:258px;width:25px;height:1px;background:#9da3ab"></div>
<div class="hl" style="left:66px;top:278px;width:757px"></div>
<div class="a" style="left:40px;top:278px;width:25px;height:1px;background:#9da3ab"></div>
<div class="hl" style="left:66px;top:298px;width:757px"></div>
<div class="a" style="left:40px;top:298px;width:25px;height:1px;background:#9da3ab"></div>
<div class="hl" style="left:66px;top:318px;width:757px"></div>
<div class="a" style="left:40px;top:318px;width:25px;height:1px;background:#9da3ab"></div>
<div class="hl" style="left:66px;top:338px;width:757px"></div>
<div class="a" style="left:40px;top:338px;width:25px;height:1px;background:#9da3ab"></div>
<div class="hl" style="left:66px;top:358px;width:757px"></div>
<div class="a" style="left:40px;top:358px;width:25px;height:1px;background:#9da3ab"></div>
<div class="hl" style="left:66px;top:378px;width:757px"></div>
<div class="a" style="left:40px;top:378px;width:25px;height:1px;background:#9da3ab"></div>
<div class="hl" style="left:66px;top:398px;width:757px"></div>
<div class="a" style="left:40px;top:398px;width:25px;height:1px;background:#9da3ab"></div>
<div class="hl" style="left:66px;top:418px;width:757px"></div>
<div class="a" style="left:40px;top:418px;width:25px;height:1px;background:#9da3ab"></div>
<div class="hl" style="left:66px;top:438px;width:757px"></div>
<div class="a" style="left:40px;top:438px;width:25px;height:1px;background:#9da3ab"></div>
<div class="hl" style="left:66px;top:458px;width:757px"></div>
<div class="a" style="left:40px;top:458px;width:25px;height:1px;background:#9da3ab"></div>
<div class="hl" style="left:66px;top:478px;width:757px"></div>
<div class="a" style="left:40px;top:478px;width:25px;height:1px;background:#9da3ab"></div>
<div class="hl" style="left:66px;top:498px;width:757px"></div>
<div class="a" style="left:40px;top:498px;width:25px;height:1px;background:#9da3ab"></div>
<div class="hl" style="left:66px;top:518px;width:757px"></div>
<div class="a" style="left:40px;top:518px;width:25px;height:1px;background:#9da3ab"></div>
<div class="hl" style="left:66px;top:538px;width:757px"></div>
<div class="a" style="left:40px;top:538px;width:25px;height:1px;background:#9da3ab"></div>
<div class="hl" style="left:66px;top:558px;width:757px"></div>
<div class="a" style="left:40px;top:558px;width:25px;height:1px;background:#9da3ab"></div>
<div class="hl" style="left:66px;top:578px;width:757px"></div>
<div class="a" style="left:40px;top:578px;width:25px;height:1px;background:#9da3ab"></div>
<div class="hl" style="left:66px;top:598px;width:757px"></div>
<div class="a" style="left:40px;top:598px;width:25px;height:1px;background:#9da3ab"></div>
<div class="hl" style="left:66px;top:618px;width:757px"></div>
<div class="a" style="left:40px;top:618px;width:25px;height:1px;background:#9da3ab"></div>
<div class="hl" style="left:66px;top:638px;width:757px"></div>
<div class="a" style="left:40px;top:638px;width:25px;height:1px;background:#9da3ab"></div>
<div class="a" style="left:136px;top:199px;width:1px;height:19px;background:#9da3ab"></div>
<div class="a" style="left:207px;top:199px;width:1px;height:19px;background:#9da3ab"></div>
<div class="a" style="left:284px;top:199px;width:1px;height:19px;background:#9da3ab"></div>
<div class="a" style="left:356px;top:199px;width:1px;height:19px;background:#9da3ab"></div>
<div class="a" style="left:429px;top:199px;width:1px;height:19px;background:#9da3ab"></div>
<div class="a" style="left:497px;top:199px;width:1px;height:19px;background:#9da3ab"></div>
<div class="a" style="left:561px;top:199px;width:1px;height:19px;background:#9da3ab"></div>
<div class="a" style="left:625px;top:199px;width:1px;height:19px;background:#9da3ab"></div>
<div class="a" style="left:689px;top:199px;width:1px;height:19px;background:#9da3ab"></div>
<div class="a" style="left:753px;top:199px;width:1px;height:19px;background:#9da3ab"></div>
<div class="a" style="left:817px;top:199px;width:1px;height:19px;background:#9da3ab"></div>
<div class="a" style="left:207px;top:199px;width:78px;height:20px;background:linear-gradient(#fee37e,#fcda66);border:1px solid #d6873a;border-top:none"></div>
<div class="a" style="left:40px;top:438px;width:26px;height:21px;background:linear-gradient(#fee37e,#fcda66);border:1px solid #d6873a;border-left:none"></div>
<svg class="a" style="left:40px;top:199px" width="25" height="19"><path d="M21 5 L21 15.5 L10.5 15.5 Z" fill="#c0c5cc"/></svg>
<div class="ch" style="left:66px;width:71px">A</div>
<div class="ch" style="left:137px;width:71px">B</div>
<div class="ch" style="left:208px;width:77px">C</div>
<div class="ch" style="left:285px;width:72px">D</div>
<div class="ch" style="left:357px;width:73px">E</div>
<div class="ch" style="left:430px;width:68px">F</div>
<div class="ch" style="left:498px;width:64px">G</div>
<div class="ch" style="left:562px;width:64px">H</div>
<div class="ch" style="left:626px;width:64px">I</div>
<div class="ch" style="left:690px;width:64px">J</div>
<div class="ch" style="left:754px;width:64px">K</div>
<div class="rh" style="top:223px">1</div>
<div class="rh" style="top:243px">2</div>
<div class="rh" style="top:263px">3</div>
<div class="rh" style="top:283px">4</div>
<div class="rh" style="top:303px">5</div>
<div class="rh" style="top:323px">6</div>
<div class="rh" style="top:343px">7</div>
<div class="rh" style="top:363px">8</div>
<div class="rh" style="top:383px">9</div>
<div class="rh" style="top:403px">10</div>
<div class="rh" style="top:423px">11</div>
<div class="rh" style="top:443px">12</div>
<div class="rh" style="top:463px">13</div>
<div class="rh" style="top:483px">14</div>
<div class="rh" style="top:503px">15</div>
<div class="rh" style="top:523px">16</div>
<div class="rh" style="top:543px">17</div>
<div class="rh" style="top:563px">18</div>
<div class="rh" style="top:583px">19</div>
<div class="rh" style="top:603px">20</div>
<div class="rh" style="top:623px">21</div>
<div class="rh" style="top:643px;height:5px;overflow:hidden">22</div>
<div class="a" style="left:66px;top:219px;width:71px;height:20px;background:#ffff00"></div>
<div class="a" style="left:66px;top:239px;width:71px;height:20px;background:#ffff00"></div>
<div class="a" style="left:66px;top:259px;width:71px;height:20px;background:#ffff00"></div>
<div class="a" style="left:66px;top:279px;width:71px;height:20px;background:#ffff00"></div>
<div class="a" style="left:66px;top:299px;width:71px;height:20px;background:#ffff00"></div>
<div class="a" style="left:66px;top:319px;width:71px;height:20px;background:#ffff00"></div>
<div class="a" style="left:66px;top:339px;width:71px;height:20px;background:#ffff00"></div>
<div class="a" style="left:66px;top:359px;width:71px;height:20px;background:#ffff00"></div>
<div class="a" style="left:137px;top:219px;width:71px;height:20px;background:#00b050"></div>
<div class="a" style="left:208px;top:219px;width:77px;height:20px;background:#00b050"></div>
<div class="a" style="left:285px;top:219px;width:72px;height:20px;background:#00b050"></div>
<div class="a" style="left:357px;top:219px;width:73px;height:20px;background:#00b050"></div>
<div class="a" style="left:430px;top:219px;width:68px;height:20px;background:#00b050"></div>
<div class="a" style="left:136px;top:219px;width:1px;height:160px;background:#000"></div>
<div class="a" style="left:207px;top:219px;width:1px;height:160px;background:#000"></div>
<div class="a" style="left:284px;top:219px;width:1px;height:160px;background:#000"></div>
<div class="a" style="left:356px;top:219px;width:1px;height:160px;background:#000"></div>
<div class="a" style="left:429px;top:219px;width:1px;height:160px;background:#000"></div>
<div class="a" style="left:497px;top:219px;width:1px;height:160px;background:#000"></div>
<div class="a" style="left:66px;top:238px;width:432px;height:1px;background:#000"></div>
<div class="a" style="left:66px;top:258px;width:432px;height:1px;background:#000"></div>
<div class="a" style="left:66px;top:278px;width:432px;height:1px;background:#000"></div>
<div class="a" style="left:66px;top:298px;width:432px;height:1px;background:#000"></div>
<div class="a" style="left:66px;top:318px;width:432px;height:1px;background:#000"></div>
<div class="a" style="left:66px;top:338px;width:432px;height:1px;background:#000"></div>
<div class="a" style="left:66px;top:358px;width:432px;height:1px;background:#000"></div>
<div class="a" style="left:66px;top:378px;width:432px;height:1px;background:#000"></div>
<div class="t g" style="left:68px;top:223px;letter-spacing:0.3px;">Дата</div>
<div class="t g" style="left:139px;top:223px;letter-spacing:0.3px;">Магазин 1</div>
<div class="t g" style="left:210px;top:223px;letter-spacing:0.3px;">Магазин 2</div>
<div class="t g" style="left:287px;top:223px;letter-spacing:0.3px;">Магазин 3</div>
<div class="t g" style="left:359px;top:223px;letter-spacing:0.3px;">Магазин 4</div>
<div class="t g" style="left:432px;top:223px;letter-spacing:0.3px;">Магазин 5</div>
<div class="t g r" style="left:65px;width:70px;top:243px;letter-spacing:0.1px;">07.03.2017</div>
<div class="t g r" style="left:136px;width:70px;top:243px;letter-spacing:0.1px;">15256,66</div>
<div class="t g r" style="left:207px;width:76px;top:243px;letter-spacing:0.1px;">14851,25</div>
<div class="t g r" style="left:284px;width:71px;top:243px;letter-spacing:0.1px;">25879,69</div>
<div class="t g r" style="left:356px;width:72px;top:243px;letter-spacing:0.1px;">10552,69</div>
<div class="t g r" style="left:429px;width:67px;top:243px;letter-spacing:0.1px;">32478,96</div>
<div class="t g r" style="left:65px;width:70px;top:263px;letter-spacing:0.1px;">08.03.2017</div>
<div class="t g r" style="left:136px;width:70px;top:263px;letter-spacing:0.1px;">17458,96</div>
<div class="t g r" style="left:207px;width:76px;top:263px;letter-spacing:0.1px;">16582,65</div>
<div class="t g r" style="left:284px;width:71px;top:263px;letter-spacing:0.1px;">23647,87</div>
<div class="t g r" style="left:356px;width:72px;top:263px;letter-spacing:0.1px;">11478,45</div>
<div class="t g r" style="left:429px;width:67px;top:263px;letter-spacing:0.1px;">33478,96</div>
<div class="t g r" style="left:65px;width:70px;top:283px;letter-spacing:0.1px;">09.03.2017</div>
<div class="t g r" style="left:136px;width:70px;top:283px;letter-spacing:0.1px;">14569,85</div>
<div class="t g r" style="left:207px;width:76px;top:283px;letter-spacing:0.1px;">17589,78</div>
<div class="t g r" style="left:284px;width:71px;top:283px;letter-spacing:0.1px;">24789,32</div>
<div class="t g r" style="left:356px;width:72px;top:283px;letter-spacing:0.1px;">11548,96</div>
<div class="t g r" style="left:429px;width:67px;top:283px;letter-spacing:0.1px;">35698,89</div>
<div class="t g r" style="left:65px;width:70px;top:303px;letter-spacing:0.1px;">10.03.2017</div>
<div class="t g r" style="left:136px;width:70px;top:303px;letter-spacing:0.1px;">13589,25</div>
<div class="t g r" style="left:207px;width:76px;top:303px;letter-spacing:0.1px;">15478,96</div>
<div class="t g r" style="left:284px;width:71px;top:303px;letter-spacing:0.1px;">22478,96</div>
<div class="t g r" style="left:356px;width:72px;top:303px;letter-spacing:0.1px;">12211,65</div>
<div class="t g r" style="left:429px;width:67px;top:303px;letter-spacing:0.1px;">33478,96</div>
<div class="t g r" style="left:65px;width:70px;top:323px;letter-spacing:0.1px;">11.03.2017</div>
<div class="t g r" style="left:136px;width:70px;top:323px;letter-spacing:0.1px;">14785,65</div>
<div class="t g r" style="left:207px;width:76px;top:323px;letter-spacing:0.1px;">14246,85</div>
<div class="t g r" style="left:284px;width:71px;top:323px;letter-spacing:0.1px;">24782,34</div>
<div class="t g r" style="left:356px;width:72px;top:323px;letter-spacing:0.1px;">11456,98</div>
<div class="t g r" style="left:429px;width:67px;top:323px;letter-spacing:0.1px;">36529,89</div>
<div class="t g r" style="left:65px;width:70px;top:343px;letter-spacing:0.1px;">12.03.2017</div>
<div class="t g r" style="left:136px;width:70px;top:343px;letter-spacing:0.1px;">16589,63</div>
<div class="t g r" style="left:207px;width:76px;top:343px;letter-spacing:0.1px;">18111,54</div>
<div class="t g r" style="left:284px;width:71px;top:343px;letter-spacing:0.1px;">26891,43</div>
<div class="t g r" style="left:356px;width:72px;top:343px;letter-spacing:0.1px;">11356,96</div>
<div class="t g r" style="left:429px;width:67px;top:343px;letter-spacing:0.1px;">35713,63</div>
<div class="t g r" style="left:65px;width:70px;top:363px;letter-spacing:0.1px;">13.03.2017</div>
<div class="t g r" style="left:136px;width:70px;top:363px;letter-spacing:0.1px;">16546,25</div>
<div class="t g r" style="left:207px;width:76px;top:363px;letter-spacing:0.1px;">17489,63</div>
<div class="t g r" style="left:284px;width:71px;top:363px;letter-spacing:0.1px;">25597,47</div>
<div class="t g r" style="left:356px;width:72px;top:363px;letter-spacing:0.1px;">12569,87</div>
<div class="t g r" style="left:429px;width:67px;top:363px;letter-spacing:0.1px;">34178,56</div>
<div class="t g r" style="left:136px;width:70px;top:383px;letter-spacing:0.1px;">108796,25</div>
<div class="t g r" style="left:207px;width:76px;top:383px;letter-spacing:0.1px;">114350,66</div>
<div class="t g r" style="left:284px;width:71px;top:383px;letter-spacing:0.1px;">174067,08</div>
<div class="t g r" style="left:356px;width:72px;top:383px;letter-spacing:0.1px;">81175,56</div>
<div class="t g r" style="left:429px;width:67px;top:383px;letter-spacing:0.1px;">241557,85</div>
<div class="a" style="left:136px;top:439px;width:1px;height:19px;background:#fff"></div>
<div class="t g" style="left:68px;top:443px;letter-spacing:0.3px;font-weight:bold;letter-spacing:0px">Общий итог</div>
<div class="t g r" style="left:207px;width:76px;top:443px;letter-spacing:0.1px;">719947,4</div>
<div class="a" style="left:206px;top:437px;width:80px;height:23px;border:2px solid #000"></div>
<div class="a" style="left:282px;top:456px;width:6px;height:6px;background:#000;border:1px solid #fff"></div>
<div class="a" style="left:823px;top:198px;width:16px;height:450px;background:#e3e6ea;border-top:1px solid #8b9097"></div>
<div class="a" style="left:837px;top:198px;width:1px;height:466px;background:#9aa0a8"></div>
<div class="a" style="left:838px;top:198px;width:1px;height:466px;background:#d0d4da"></div>
<div class="a" style="left:839px;top:83px;width:1px;height:604px;background:#6e7680"></div>
<div class="a" style="left:825px;top:200px;width:12px;height:7px;border:1px solid #6d737b;background:#fff"></div>
<div class="a" style="left:828px;top:203px;width:6px;height:1px;background:#6d737b"></div>
<svg class="a" style="left:826px;top:212px" width="10" height="5"><path d="M0 5 L5 0 L10 5 Z" fill="#5a4a4a"/></svg>
<div class="a" style="left:823px;top:224px;width:15px;height:387px;border:1px solid #8f96a0;border-radius:2px;background:linear-gradient(90deg,#f3f5f8,#e9ecf0 50%,#d9dde3)"></div>
<div class="a" style="left:827px;top:414px;width:8px;height:1px;background:#5a5560"></div>
<div class="a" style="left:827px;top:416px;width:8px;height:1px;background:#5a5560"></div>
<div class="a" style="left:827px;top:418px;width:8px;height:1px;background:#5a5560"></div>
<div class="a" style="left:827px;top:420px;width:8px;height:1px;background:#5a5560"></div>
<svg class="a" style="left:826px;top:637px" width="10" height="5"><path d="M0 0 L10 0 L5 5 Z" fill="#5a4a4a"/></svg>
<div class="a" style="left:40px;top:648px;width:798px;height:16px;background:#e1e4e8;border-top:1px solid #a6acb4"></div>
<div class="a" style="left:40px;top:663px;width:799px;height:2px;background:#8e949c"></div>
<div class="a" style="left:40px;top:648px;width:63px;height:15px;background:linear-gradient(#e9ecef,#dde1e5);border-top:1px solid #a6acb4;border-right:1px solid #b8bec5"></div>
<svg class="a" style="left:45px;top:651px" width="54" height="9" viewBox="0 0 54 9">
<rect x="1" y="0.5" width="1.6" height="8" fill="#5d4b4b"/><path d="M7.5 0.5 L3 4.5 L7.5 8.5 Z" fill="#5d4b4b"/>
<path d="M21 0.5 L16.5 4.5 L21 8.5 Z" fill="#5d4b4b"/>
<path d="M31 0.5 L35.5 4.5 L31 8.5 Z" fill="#5d4b4b"/>
<path d="M45 0.5 L49.5 4.5 L45 8.5 Z" fill="#5d4b4b"/><rect x="50" y="0.5" width="1.6" height="8" fill="#5d4b4b"/>
</svg>
<svg class="a" style="left:100px;top:647px" width="420" height="18" viewBox="0 0 420 18">
<path d="M3 0 H66 L52 16 H3 Z" fill="#ffffff"/>
<path d="M66 1.5 H411" stroke="#a6acb4"/>
<path d="M52 16 L66 1 M106 16 L118 1 M160 16 L172 1 M191 16 L203 1" stroke="#9ba2aa" fill="none"/>
</svg>
<div class="t" style="left:112px;top:651px;font-size:12px;font-weight:bold;color:#3a2a2a;letter-spacing:0.5px">Лист1</div>
<div class="t" style="left:166px;top:651px;font-size:12px;color:#3a2a2a;letter-spacing:0.4px">Лист2</div>
<div class="t" style="left:219px;top:651px;font-size:12px;color:#3a2a2a;letter-spacing:0.4px">Лист3</div>
<svg class="a" style="left:273px;top:649px" width="16" height="14" viewBox="0 0 16 14">
<path d="M3.5 4.5 H14.5 V12.5 H3.5 Z" fill="#fff" stroke="#4a6a98"/>
<path d="M4 12.5 H13" stroke="#4a6a98"/>
<circle cx="4" cy="4" r="2.6" fill="#f5a623"/>
</svg>
<div class="a" style="left:511px;top:649px;width:7px;height:13px;border:1px solid #6d737b;background:#fff"></div>
<div class="a" style="left:514px;top:652px;width:1px;height:7px;background:#6d737b"></div>
<svg class="a" style="left:523px;top:651px" width="5" height="9"><path d="M5 0 V9 L0 4.5 Z" fill="#5a4a4a"/></svg>
<div class="a" style="left:536px;top:649px;width:239px;height:14px;border:1px solid #8f96a0;border-radius:2px;background:linear-gradient(#f5f7f9,#e8ebef 50%,#dcdfe4)"></div>
<div class="a" style="left:652px;top:653px;width:1px;height:7px;background:#5a5560"></div>
<div class="a" style="left:654px;top:653px;width:1px;height:7px;background:#5a5560"></div>
<div class="a" style="left:656px;top:653px;width:1px;height:7px;background:#5a5560"></div>
<div class="a" style="left:658px;top:653px;width:1px;height:7px;background:#5a5560"></div>
<svg class="a" style="left:804px;top:651px" width="5" height="9"><path d="M0 0 V9 L5 4.5 Z" fill="#5a4a4a"/></svg>
<div class="a" style="left:816px;top:649px;width:7px;height:13px;border:1px solid #6d737b;background:#fff"></div>
<div class="a" style="left:819px;top:652px;width:1px;height:7px;background:#6d737b"></div>
<div class="a" style="left:823px;top:648px;width:15px;height:15px;background:#e3e6ea;border-top:1px solid #a6acb4"></div>
<div class="a" style="left:39px;top:665px;width:800px;height:21px;background:linear-gradient(#eef0f3 0px,#e2e5e9 4px,#dcdfe3 55%,#d4d8dd 78%,#c8ccd2 82%,#c5c9cf)"></div>
<div class="t" style="left:48px;top:670px;font-size:12px;color:#3d3434">Готово</div>
<div class="a" style="left:102px;top:666px;width:1px;height:19px;background:#a7adb5"></div>
<div class="a" style="left:137px;top:666px;width:1px;height:19px;background:#a7adb5"></div>
<svg class="a" style="left:112px;top:667px" width="16" height="15" viewBox="0 0 16 15">
<rect x="2.5" y="3.5" width="13" height="11" fill="#fff" stroke="#3a6aa8"/>
<rect x="3" y="4" width="12" height="3" fill="#4a86c8"/>
<path d="M5 9 H14 M5 11 H14 M5 13 H14" stroke="#6a9ad0"/>
<circle cx="3.5" cy="3.5" r="3" fill="#e08a3a"/>
</svg>
<div class="a" style="left:582px;top:666px;width:1px;height:19px;background:#a7adb5"></div>
<div class="a" style="left:587px;top:666px;width:19px;height:19px;border:1px solid #c9a254;border-radius:2px;background:linear-gradient(#fde9a6,#fbd876 50%,#f9cd58)"></div>
<svg class="a" style="left:590px;top:669px" width="14" height="12" viewBox="0 0 14 12">
<rect x="0.5" y="0.5" width="13" height="11" fill="#fff" stroke="#555"/>
<path d="M0.5 4 H13.5 M0.5 7.5 H13.5 M4.5 0.5 V11.5 M9 0.5 V11.5" stroke="#555"/>
</svg>
<svg class="a" style="left:608px;top:669px" width="14" height="12" viewBox="0 0 14 12">
<rect x="0.5" y="0.5" width="13" height="11" fill="#e7eaee" stroke="#555"/>
<rect x="3.5" y="2.5" width="7" height="7" fill="#fff" stroke="#777"/>
<path d="M5 5 H9 M5 7 H9" stroke="#999"/>
</svg>
<svg class="a" style="left:627px;top:669px" width="14" height="12" viewBox="0 0 14 12">
<rect x="0.5" y="0.5" width="13" height="11" fill="#d6d9de" stroke="#555"/>
<rect x="0.5" y="0.5" width="8" height="6" fill="#fff" stroke="#555"/>
<path d="M4.5 0.5 V6.5" stroke="#555"/>
</svg>
<div class="t" style="left:652.5px;top:670px;font-size:11.5px;color:#3d3434">100%</div>
<div class="a" style="left:688px;top:667px;width:16px;height:16px;border-radius:50%;border:1px solid #8f96a0;background:linear-gradient(#ffffff,#e4e7eb)"></div>
<div class="a" style="left:692px;top:674px;width:9px;height:2px;background:#4a3a3a"></div>
<div class="a" style="left:804px;top:667px;width:16px;height:16px;border-radius:50%;border:1px solid #8f96a0;background:linear-gradient(#ffffff,#e4e7eb)"></div>
<div class="a" style="left:808px;top:674px;width:9px;height:2px;background:#4a3a3a"></div>
<div class="a" style="left:811.5px;top:670.5px;width:2px;height:9px;background:#4a3a3a"></div>
<div class="a" style="left:704px;top:675px;width:100px;height:1px;background:repeating-linear-gradient(90deg,#8a9099 0 1px,#c9cdd3 1px 2px)"></div>
<svg class="a" style="left:750px;top:668px" width="10" height="14" viewBox="0 0 10 14"><path d="M0.5 0.5 H9.5 V9 L5 13.5 L0.5 9 Z" fill="#f5f6f8" stroke="#6d737b"/></svg>
<svg class="a" style="left:826px;top:676px" width="12" height="10" viewBox="0 0 12 10">
<rect x="9" y="1" width="2" height="2" fill="#a0a6ae"/><rect x="6" y="4" width="2" height="2" fill="#a0a6ae"/><rect x="9" y="4" width="2" height="2" fill="#a0a6ae"/>
<rect x="3" y="7" width="2" height="2" fill="#a0a6ae"/><rect x="6" y="7" width="2" height="2" fill="#a0a6ae"/><rect x="9" y="7" width="2" height="2" fill="#a0a6ae"/>
</svg>
<div class="a" style="left:39px;top:83px;width:1px;height:604px;background:#6e7680"></div>
<div class="a" style="left:39px;top:686px;width:801px;height:1px;background:#6e7680"></div>
<div class="a" style="left:285px;top:169px;width:142px;height:37px;border:5px solid #ff0000;border-radius:12px;box-shadow:2px 3px 5px rgba(0,0,0,0.5), inset 3px 3px 5px rgba(0,0,0,0.45)"></div>
<div class="a" style="left:196px;top:428px;width:103px;height:44px;border:5px solid #ff0000;border-radius:13px;box-shadow:2px 3px 5px rgba(0,0,0,0.5), inset 3px 3px 5px rgba(0,0,0,0.45)"></div>
</body></html>
